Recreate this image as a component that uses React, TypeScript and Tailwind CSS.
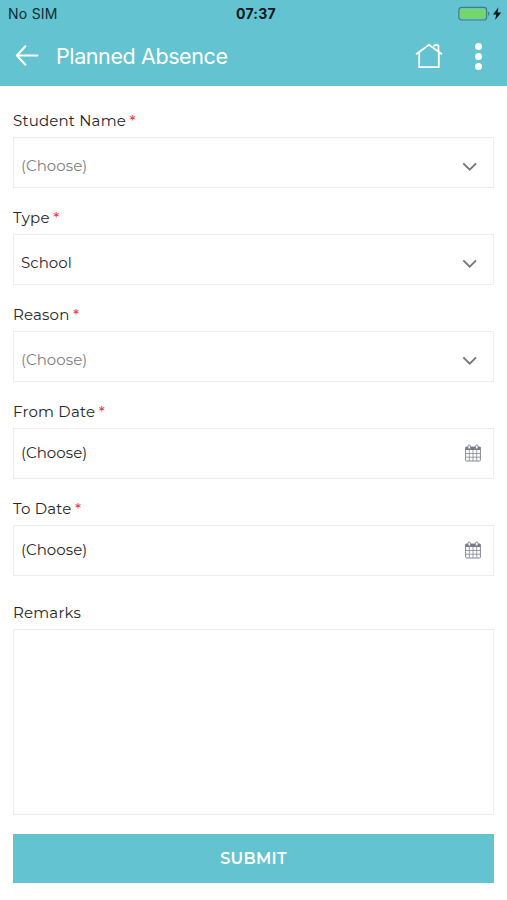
import React, { ReactElement } from "react";

type FieldProps = {
  label: string;
  value: string;
  valueClass: string;
  kind: "select" | "date";
};

const FIELDS: FieldProps[] = [
  {
    label: "Student Name",
    value: "(Choose)",
    valueClass: "text-[#7d8085]",
    kind: "select",
  },
  {
    label: "Type",
    value: "School",
    valueClass: "text-[#262628]",
    kind: "select",
  },
  {
    label: "Reason",
    value: "(Choose)",
    valueClass: "text-[#7d8085]",
    kind: "select",
  },
  {
    label: "From Date",
    value: "(Choose)",
    valueClass: "text-[#262628]",
    kind: "date",
  },
  {
    label: "To Date",
    value: "(Choose)",
    valueClass: "text-[#262628]",
    kind: "date",
  },
];

const BackIcon = (): ReactElement => (
  <svg width="24" height="22" viewBox="0 0 24 22" fill="none" stroke="white" strokeWidth="2.1" strokeLinecap="round" strokeLinejoin="round">
    <path d="M10.4 1.3 1.9 10.5l8.5 9.2M1.9 10.5h20.5" />
  </svg>
);

const HomeIcon = (): ReactElement => (
  <svg width="28" height="27" viewBox="0 0 28 27" fill="none" stroke="white" strokeWidth="1.8">
    <path d="M1 11.2 14 1.8l13 9.4M4.2 10v14.1h19.6V10M18.8 3.4c.6-1.8 4.3-1.8 4.7-.4v4.7" />
  </svg>
);

const Battery = (): ReactElement => (
  <svg width="44" height="16" viewBox="0 0 44 16">
    <rect x="0.8" y="1.4" width="27.8" height="12.6" rx="2.8" fill="none" stroke="#3d7f8d" strokeWidth="1.2" />
    <rect x="2.2" y="2.8" width="25" height="9.8" rx="1.5" fill="#75d76b" />
    <path d="M30 5.7v4c1.9-.5 1.9-3.5 0-4Z" fill="#3d7f8d" />
    <path d="M40.5 1.2 35 8.4h3.3L37.1 14l6.2-7.4h-3.8Z" fill="#08171a" />
  </svg>
);

const ChevronIcon = (): ReactElement => (
  <svg width="16" height="10" viewBox="0 0 16 10" fill="none" stroke="#74777b" strokeWidth="1.9">
    <path d="M1.3 1.3 7.7 7.7l6.4-6.4" />
  </svg>
);

const CalendarIcon = (): ReactElement => (
  <svg width="16" height="18" viewBox="0 0 16 18" fill="none" stroke="#858795">
    <rect x="0.6" y="3" width="14.8" height="14" rx="0.8" />
    <path d="M.6 3h14.8v3H.6Z" fill="#777a89" stroke="none" />
    <path d="M1 9.5h14M1 13.2h14M4.3 6v11M8 6v11M11.7 6v11" strokeWidth="0.8" />
    <rect x="3" y="1" width="2.4" height="4" rx="1.1" fill="white" />
    <rect x="10.6" y="1" width="2.4" height="4" rx="1.1" fill="white" />
  </svg>
);

const Field = ({ label, value, valueClass, kind }: FieldProps): ReactElement => (
  <div className="h-[97px]">
    <div className="flex h-[30px] items-center pb-[2px] text-[15px] leading-5 text-[#262628]">
      <span className="tracking-[0.18px]">{label}</span>
      <span className="ml-[3.5px] pb-px font-medium text-[#ee4238]">*</span>
    </div>
    <div className="flex h-[51px] items-center justify-between border border-[#ededee] pl-[7px] pr-[12px]">
      <span className={`${valueClass} text-[15px] leading-5 tracking-[0.05px] ${kind === "select" ? "pt-[7px]" : "pb-[2px]"}`}>
        {value}
      </span>
      {kind === "select" ? (
        <span className="mr-[3px] pt-[8px]">
          <ChevronIcon />
        </span>
      ) : (
        <span className="pb-[2px]">
          <CalendarIcon />
        </span>
      )}
    </div>
  </div>
);

const App = (): ReactElement => {
  return (
    <div className="flex h-[900px] w-[507px] flex-col bg-white font-['Montserrat','Inter',sans-serif]">
      <header className="h-[86px] bg-[#64c3d1] font-['Inter',sans-serif]">
        <div className="grid h-[27px] grid-cols-3 items-center text-[14px] text-[#0d2a30]">
          <span className="pl-[8px] tracking-[0.25px]">No SIM</span>
          <span className="pl-[5px] text-center font-bold tracking-[0.25px] text-[#08171a]">07:37</span>
          <span className="flex justify-end pr-[5px]">
            <Battery />
          </span>
        </div>
        <div className="flex h-[58px] items-center pl-[15px] pr-[25px] text-white">
          <BackIcon />
          <h1 className="ml-[17px] flex-1 text-[21.5px] leading-7 tracking-[-0.4px]">Planned Absence</h1>
          <HomeIcon />
          <div className="ml-[32px] flex flex-col gap-[3px]">
            <i className="size-[7px] rounded-full bg-white" />
            <i className="size-[7px] rounded-full bg-white" />
            <i className="size-[7px] rounded-full bg-white" />
          </div>
        </div>
      </header>
      <main className="px-[13px] pt-[21px]">
        {FIELDS.map(field => (
          <Field key={field.label} {...field} />
        ))}
        <div className="flex h-[37px] items-center pt-[4px] text-[15px] leading-5 tracking-[0.18px] text-[#262628]">
          Remarks
        </div>
        <textarea className="block h-[186px] w-full resize-none border border-[#ededee] outline-none" />
        <button className="mt-[19px] block h-[49px] w-full bg-[#64c3d1] pt-px text-[16px] font-semibold tracking-[0.3px] text-white">
          SUBMIT
        </button>
      </main>
    </div>
  );
};

export default App;
